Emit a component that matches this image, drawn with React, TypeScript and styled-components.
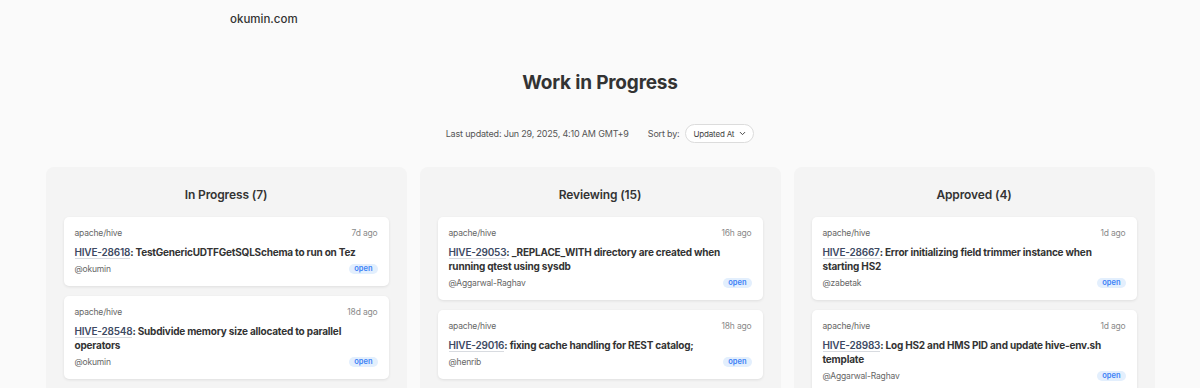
import styled, { createGlobalStyle } from 'styled-components'

const GlobalStyle = createGlobalStyle`
  * {
    box-sizing: border-box;
  }
  body {
    margin: 0;
    background: #fafafa;
    font-family: Inter, 'Noto Sans', sans-serif;
    color: #333;
  }
`

const Header = styled.header`
  width: 740px;
  margin: 0 auto;
  padding: 11px 0;
  font-size: 11.5px;
  font-weight: 500;
  line-height: 16px;
  color: #333;
`

const Main = styled.main`
  width: 1109px;
  margin: 0 auto;
  padding-top: 31px;
`

const Title = styled.h1`
  margin: 0;
  text-align: center;
  font-size: 19px;
  font-weight: 700;
  letter-spacing: -0.01em;
  line-height: 28px;
  color: #333;
`

const Meta = styled.div`
  display: flex;
  justify-content: center;
  align-items: center;
  gap: 19px;
  margin-top: 27px;
  font-size: 9px;
  letter-spacing: -0.02em;
  color: #555;
`

const SortBy = styled.label`
  display: flex;
  align-items: center;
  gap: 5px;
`

const Select = styled.div`
  display: flex;
  align-items: center;
  gap: 4px;
  height: 19px;
  padding: 0 6px 0 8px;
  border: 1px solid #dcdcdc;
  border-radius: 10px;
  background: #fff;
  font-size: 8px;
  color: #444;
`

const Columns = styled.div`
  display: grid;
  grid-template-columns: repeat(3, 1fr);
  gap: 13px;
  margin-top: 24px;
  align-items: start;
`

const Column = styled.section`
  background: #f4f4f4;
  border-radius: 8px;
  padding: 19px 18px 18px;
`

const ColumnTitle = styled.h2`
  margin: 0 0 13px;
  text-align: center;
  font-size: 12px;
  font-weight: 600;
  letter-spacing: -0.01em;
  line-height: 18px;
  color: #333;
`

const CardList = styled.div`
  display: flex;
  flex-direction: column;
  gap: 10px;
`

const Card = styled.article`
  background: #fff;
  border-radius: 5px;
  padding: 10px 11px 11px;
  box-shadow: 0 1px 3px rgba(0, 0, 0, 0.09);
`

const Row = styled.div`
  display: flex;
  justify-content: space-between;
  align-items: center;
  line-height: 12px;
  font-size: 8.5px;
  letter-spacing: -0.02em;
`

const Repo = styled.span`
  color: #666;
`

const Time = styled.span`
  color: #8a8a8a;
`

const CardTitle = styled.div`
  margin: 6px 0 4px;
  font-size: 10px;
  font-weight: 700;
  letter-spacing: -0.02em;
  line-height: 14px;
  color: #333;
`

const IssueLink = styled.a`
  color: #3d4a63;
  font-weight: 600;
  text-decoration: none;
  border-bottom: 1px solid #d8dbe0;
`

const Author = styled.span`
  color: #666;
`

const Badge = styled.span`
  display: inline-flex;
  align-items: center;
  height: 10px;
  padding: 0 5px;
  border-radius: 5px;
  background: #e3effd;
  color: #3b82f6;
  font-size: 7.5px;
  font-weight: 600;
  letter-spacing: 0;
`

interface Pr {
  issue: string
  title: string
  author: string
  age: string
}

const columns: { name: string; count: number; prs: Pr[] }[] = [
  {
    name: 'In Progress',
    count: 7,
    prs: [
      { issue: 'HIVE-28618', title: 'TestGenericUDTFGetSQLSchema to run on Tez', author: 'okumin', age: '7d ago' },
      { issue: 'HIVE-28548', title: 'Subdivide memory size allocated to parallel operators', author: 'okumin', age: '18d ago' },
    ],
  },
  {
    name: 'Reviewing',
    count: 15,
    prs: [
      { issue: 'HIVE-29053', title: '_REPLACE_WITH directory are created when running qtest using sysdb', author: 'Aggarwal-Raghav', age: '16h ago' },
      { issue: 'HIVE-29016', title: 'fixing cache handling for REST catalog;', author: 'henrib', age: '18h ago' },
    ],
  },
  {
    name: 'Approved',
    count: 4,
    prs: [
      { issue: 'HIVE-28667', title: 'Error initializing field trimmer instance when starting HS2', author: 'zabetak', age: '1d ago' },
      { issue: 'HIVE-28983', title: 'Log HS2 and HMS PID and update hive-env.sh template', author: 'Aggarwal-Raghav', age: '1d ago' },
    ],
  },
]

const Chevron = () => (
  <svg width="9" height="9" viewBox="0 0 24 24" fill="none" stroke="#444" strokeWidth="2.6" strokeLinecap="round" strokeLinejoin="round">
    <path d="m6 9 6 6 6-6" />
  </svg>
)

const App = () => (
  <>
    <GlobalStyle />
    <Header>okumin.com</Header>
    <Main>
      <Title>Work in Progress</Title>
      <Meta>
        <span>Last updated: Jun 29, 2025, 4:10 AM GMT+9</span>
        <SortBy>
          Sort by:
          <Select>
            Updated At
            <Chevron />
          </Select>
        </SortBy>
      </Meta>
      <Columns>
        {columns.map((col) => (
          <Column key={col.name}>
            <ColumnTitle>
              {col.name} ({col.count})
            </ColumnTitle>
            <CardList>
              {col.prs.map((pr) => (
                <Card key={pr.issue}>
                  <Row>
                    <Repo>apache/hive</Repo>
                    <Time>{pr.age}</Time>
                  </Row>
                  <CardTitle>
                    <IssueLink href="#">{pr.issue}</IssueLink>: {pr.title}
                  </CardTitle>
                  <Row>
                    <Author>@{pr.author}</Author>
                    <Badge>open</Badge>
                  </Row>
                </Card>
              ))}
            </CardList>
          </Column>
        ))}
      </Columns>
    </Main>
  </>
)

export default App
